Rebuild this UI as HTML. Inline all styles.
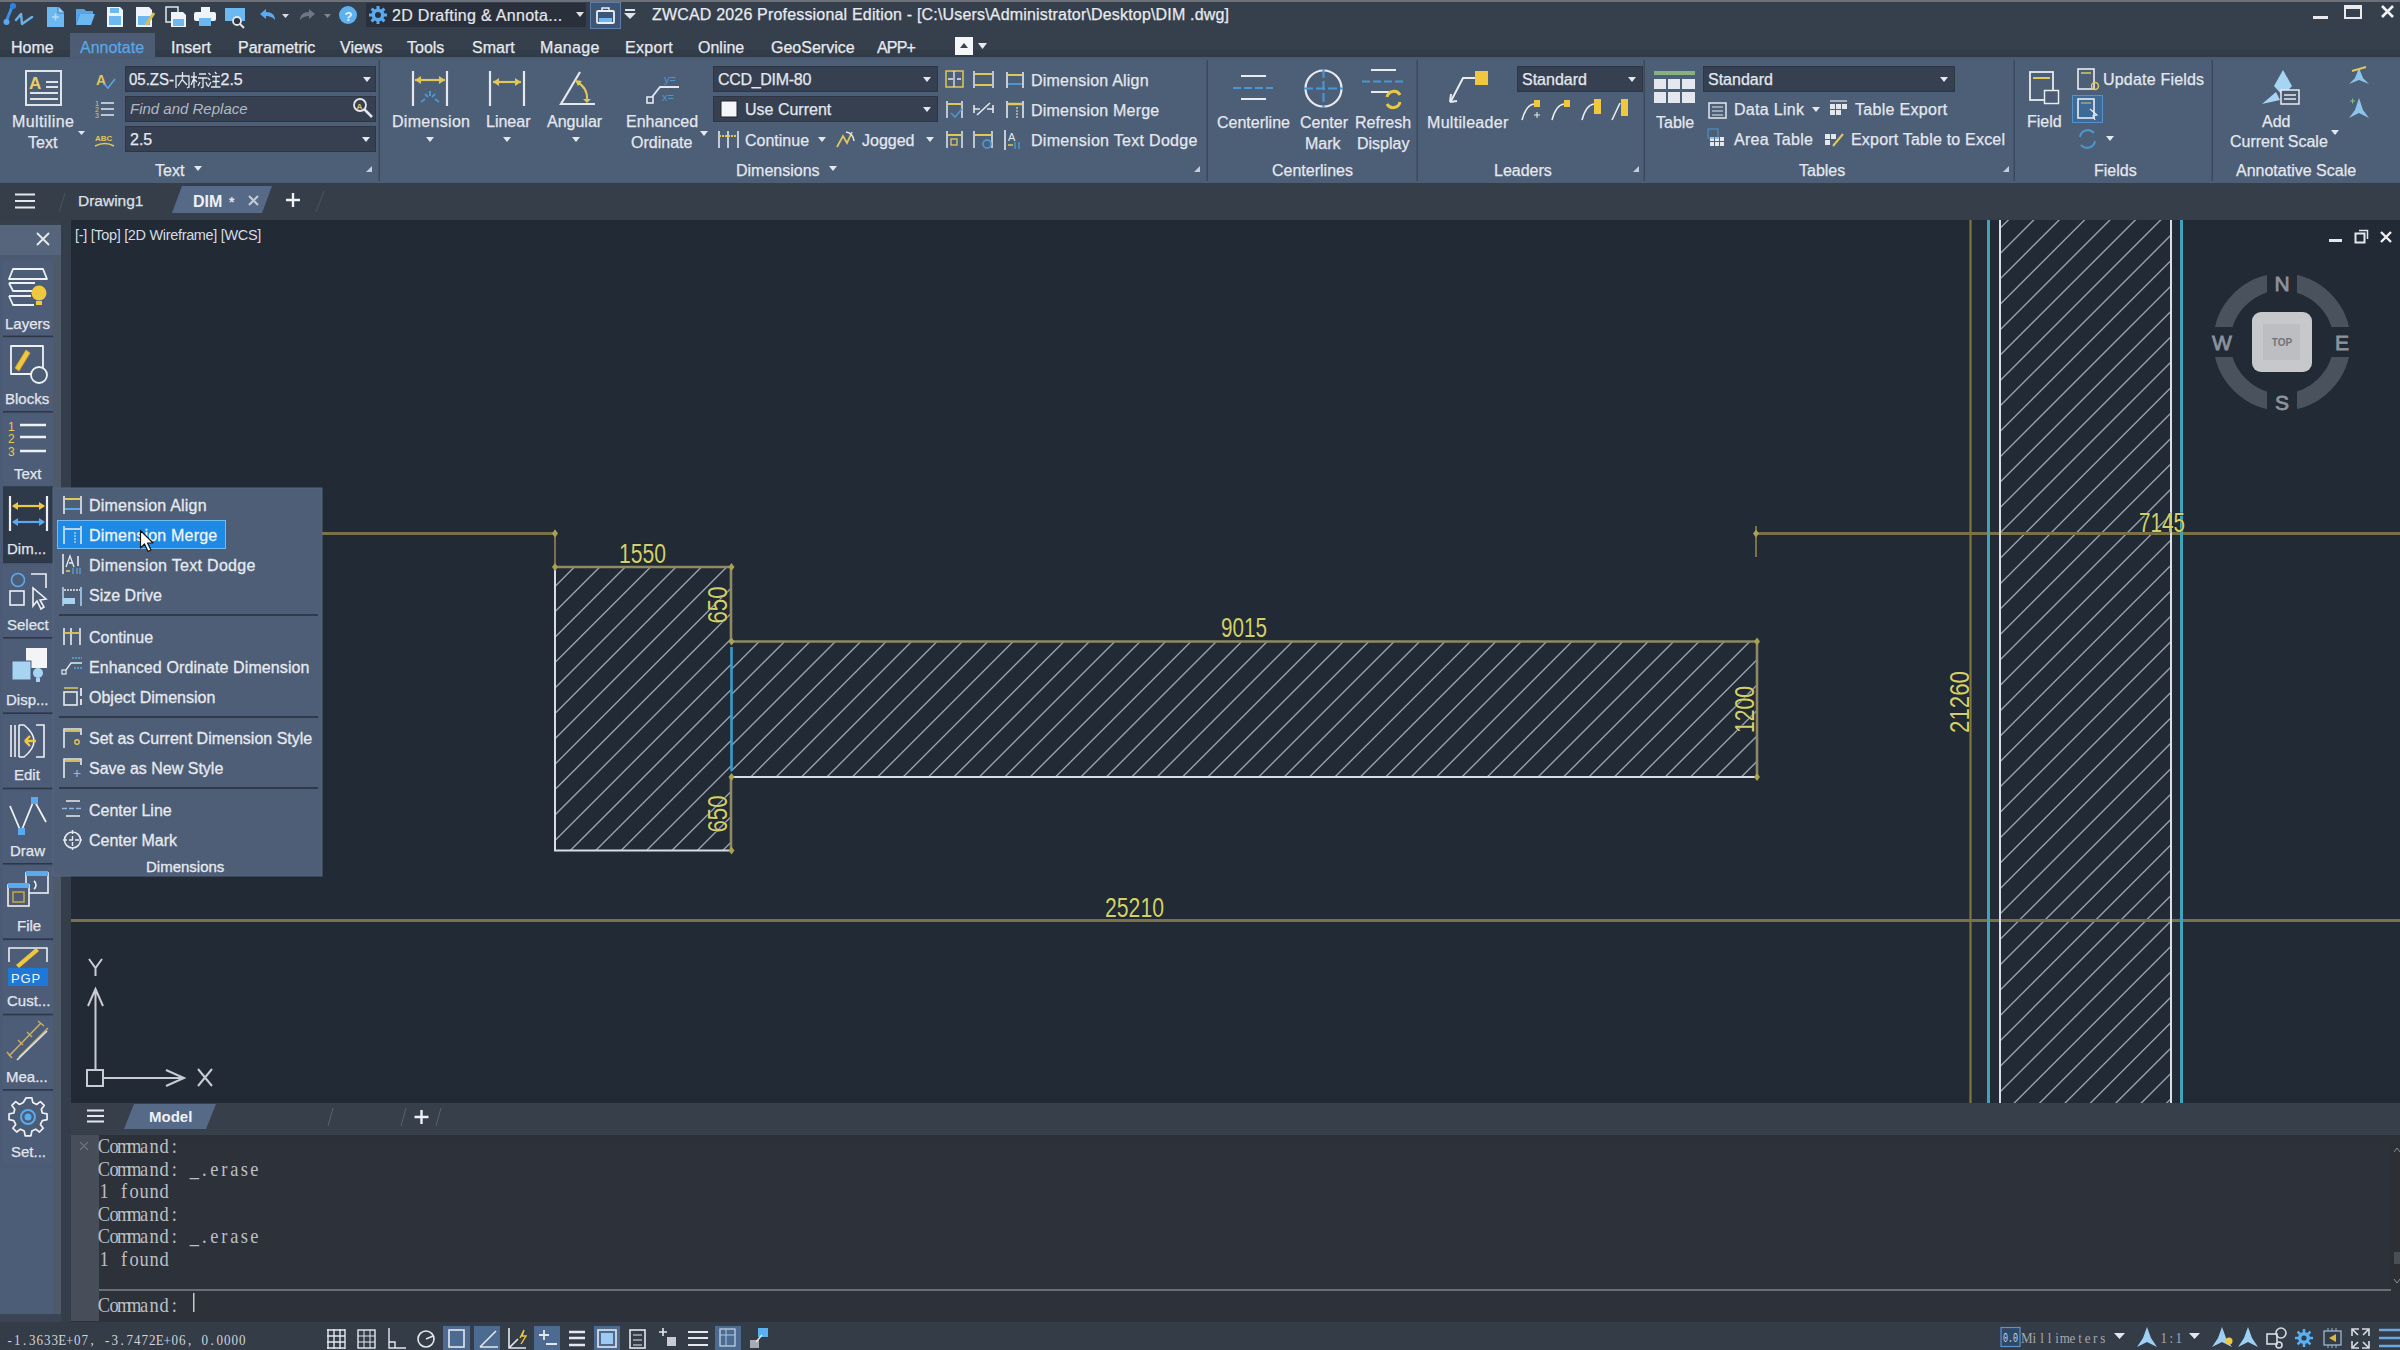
<!DOCTYPE html>
<html><head><meta charset="utf-8">
<style>
*{margin:0;padding:0}
html,body{width:2400px;height:1350px;overflow:hidden;background:#212a35}
svg{display:block}
text{font-family:"Liberation Sans",sans-serif;white-space:pre}
.m{font-family:"Liberation Mono",monospace}
</style></head><body>
<svg width="2400" height="1350" viewBox="0 0 2400 1350">
<!-- backgrounds -->
<rect x="0" y="0" width="2400" height="58" fill="#36404d"/>
<rect x="0" y="50" width="2400" height="8" fill="#323b48"/>
<rect x="0" y="0" width="2400" height="2" fill="#6b7079"/>
<rect x="70" y="33" width="85" height="25" fill="#4d5b73"/>
<rect x="0" y="58" width="2400" height="125" fill="#4d5e77"/>
<rect x="0" y="57" width="2400" height="2" fill="#4a5a72"/>
<rect x="0" y="183" width="2400" height="37" fill="#363e4a"/>
<rect x="71" y="220" width="2329" height="883" fill="#212a35"/>
<rect x="53" y="220" width="8" height="1102" fill="#4e5969"/>
<rect x="61" y="220" width="10" height="1102" fill="#343d4a"/>
<rect x="0" y="220" width="53" height="1102" fill="#4b5b75"/>
<rect x="71" y="1103" width="2329" height="32" fill="#373f4b"/>
<rect x="71" y="1135" width="2329" height="187" fill="#2d3139"/>
<rect x="71" y="1135" width="2329" height="8" fill="#2c3039"/>
<rect x="0" y="1322" width="2400" height="28" fill="#343c48"/>

<!-- title bar icons -->
<g stroke-linecap="round" stroke-linejoin="round">
  <path d="M6,22 L12,7" stroke="#3d8fe0" stroke-width="3" fill="none"/>
  <circle cx="13" cy="6" r="3" fill="#2f7fe0"/>
  <circle cx="6.5" cy="22" r="3" fill="#5aa8ee"/>
  <path d="M16,20 L21,14 L22,24 L32,17" stroke="#6ab0e8" stroke-width="2.5" fill="none"/>
</g>
<path d="M47,7 H59 L64,12 V27 H47 Z" fill="#6cb8f0"/>
<path d="M58,7 V13 H64" fill="#9fd0f5" stroke="#3a7cc0" stroke-width="1"/>
<path d="M52,17 H59 M55.5,13.5 V20.5" stroke="#b8dcf8" stroke-width="1.5"/>
<path d="M76,9 H84 L86,11 H93 V14 H80 L76,25 Z" fill="#5aa2e0"/>
<path d="M80,14 H95 L91,25 H76 Z" fill="#6cb8f0"/>
<path d="M107,7 H120 L123,10 V27 H107 Z" fill="#eef4fa"/>
<rect x="109" y="16" width="12" height="9" fill="#6cb8f0"/>
<rect x="110" y="8" width="9" height="5" fill="#6cb8f0"/>
<path d="M136,7 H149 L152,10 V27 H136 Z" fill="#eef4fa"/>
<rect x="138" y="16" width="12" height="9" fill="#6cb8f0"/>
<path d="M146,25 L154,13" stroke="#d8c050" stroke-width="3"/>
<path d="M166,7 H178 V22 H166 Z" fill="none" stroke="#dfe8f0" stroke-width="1.5"/>
<path d="M171,12 H183 L186,15 V27 H171 Z" fill="#eef4fa"/>
<rect x="173" y="19" width="11" height="7" fill="#6cb8f0"/>
<rect x="201" y="7" width="9" height="5" fill="#eef4fa"/>
<rect x="194" y="12" width="22" height="9" rx="2" fill="#eef4fa"/>
<rect x="199" y="18" width="12" height="8" fill="#6cb8f0"/>
<rect x="225" y="8" width="20" height="13" fill="#6cb8f0"/>
<circle cx="237" cy="21" r="4" fill="#2e3541" stroke="#e0e6ee" stroke-width="1.8"/>
<path d="M240,24 L244,28" stroke="#e0e6ee" stroke-width="2"/>
<path d="M260,14 L266,9 V12 C272,12 275,15 275,20 C272,17 270,16 266,16 V19 Z" fill="#5aaaf0"/>
<path d="M282,14 H289 L285.5,18 Z" fill="#d8dde4"/>
<path d="M315,14 L309,9 V12 C303,12 300,15 300,20 C303,17 305,16 309,16 V19 Z" fill="#6d7785"/>
<path d="M324,14 H331 L327.5,18 Z" fill="#7d8794"/>
<circle cx="348" cy="15" r="9" fill="#5eb0f0"/>
<text x="344.5" y="20.5" font-size="13" fill="#e8f4ff" font-weight="700">?</text>
<rect x="366" y="3" width="220" height="24" fill="#29303b"/>
<g transform="translate(378,15)" fill="#5aaaf0">
  <circle r="6.5"/>
  <g stroke="#5aaaf0" stroke-width="3">
   <path d="M0,-9 V9 M-9,0 H9 M-6.4,-6.4 L6.4,6.4 M-6.4,6.4 L6.4,-6.4"/>
  </g>
  <circle r="3" fill="#29303b"/>
</g>
<text x="392" y="21" font-size="16" fill="#e4e7ec" stroke="#e4e7ec" stroke-width="0.2" letter-spacing="0.3">2D Drafting &amp; Annota...</text>
<path d="M576,12 H584 L580,17 Z" fill="#dfe3e8"/>
<rect x="590.5" y="2.5" width="30" height="26" fill="#3d5675" stroke="#5b7fa8" stroke-width="1"/>
<rect x="597" y="11" width="17" height="12" rx="1" fill="none" stroke="#e8eef4" stroke-width="1.8"/>
<path d="M602,11 V8 H609 V11" fill="none" stroke="#e8eef4" stroke-width="1.5"/>
<rect x="599" y="18" width="13" height="4" fill="#6cb8f0"/>
<rect x="625" y="9" width="10" height="2" fill="#dfe3e8"/>
<path d="M624,13 H636 L630,19 Z" fill="#dfe3e8"/>
<text x="652" y="20" font-size="16" fill="#e8eaee" stroke="#e8eaee" stroke-width="0.25" letter-spacing="0.18">ZWCAD 2026 Professional Edition - [C:\Users\Administrator\Desktop\DIM .dwg]</text>
<!-- window controls -->
<rect x="2313" y="16" width="15" height="3" fill="#e8eaee"/>
<rect x="2345" y="6" width="16" height="12" fill="none" stroke="#e8eaee" stroke-width="2"/>
<rect x="2345" y="6" width="16" height="3" fill="#e8eaee"/>
<path d="M2382,6 L2393,17 M2393,6 L2382,17" stroke="#f0f2f5" stroke-width="2.6"/>
<!-- menu -->
<g font-size="16" fill="#e6e9ee" stroke="#e6e9ee" stroke-width="0.25">
<text x="11" y="53">Home</text>
<text x="80" y="53" fill="#5aa6e6" stroke="#5aa6e6">Annotate</text>
<text x="171" y="53">Insert</text>
<text x="238" y="53">Parametric</text>
<text x="340" y="53">Views</text>
<text x="407" y="53">Tools</text>
<text x="472" y="53">Smart</text>
<text x="540" y="53" letter-spacing="0.3">Manage</text>
<text x="625" y="53" letter-spacing="0.3">Export</text>
<text x="698" y="53">Online</text>
<text x="771" y="53">GeoService</text>
<text x="877" y="53" letter-spacing="-0.8">APP+</text>
</g>
<rect x="955" y="37" width="18" height="18" fill="#f4f6f8"/>
<path d="M960,48 H968 L964,43 Z" fill="#3b4350"/>
<path d="M978,43 H987 L982.5,49 Z" fill="#e8eaee"/>

<!-- ribbon panel separators -->
<g fill="#3b495c" transform="translate(0.5,0) scale(1,1)">
<rect x="378" y="60" width="1.5" height="121"/>
<rect x="1206" y="60" width="1.5" height="121"/>
<rect x="1416" y="60" width="1.5" height="121"/>
<rect x="1643" y="60" width="1.5" height="121"/>
<rect x="2013" y="60" width="1.5" height="121"/>
<rect x="2211" y="60" width="1.5" height="121"/>
</g>
<!-- combos -->
<g fill="#364050" stroke="#2e3644" stroke-width="1">
<rect x="125.5" y="66.5" width="250" height="25"/>
<rect x="125.5" y="96.5" width="250" height="25"/>
<rect x="125.5" y="126.5" width="250" height="25"/>
<rect x="713.5" y="66.5" width="224" height="25"/>
<rect x="713.5" y="96.5" width="224" height="25"/>
<rect x="1517.5" y="66.5" width="125" height="25"/>
<rect x="1703.5" y="66.5" width="251" height="25"/>
</g>
<g fill="#e4e8ee">
<path d="M363,77 H371 L367,82 Z"/>
<path d="M362,137 H370 L366,142 Z"/>
<path d="M923,77 H931 L927,82 Z"/>
<path d="M923,107 H931 L927,112 Z"/>
<path d="M1628,77 H1636 L1632,82 Z"/>
<path d="M1940,77 H1948 L1944,82 Z"/>
<path d="M78,131 H85 L81.5,135 Z"/>
<path d="M426,137 H434 L430,142 Z"/>
<path d="M503,137 H511 L507,142 Z"/>
<path d="M572,137 H580 L576,142 Z"/>
<path d="M700,131 H708 L704,136 Z"/>
<path d="M818,137 H826 L822,142 Z"/>
<path d="M926,137 H934 L930,142 Z"/>
<path d="M1812,107 H1820 L1816,112 Z"/>
<path d="M2106,136 H2114 L2110,141 Z"/>
<path d="M2331,130 H2339 L2335,135 Z"/>
<path d="M194,166 H202 L198,171 Z"/>
<path d="M829,166 H837 L833,171 Z"/>
<path d="M372,166 V172 H366 Z" opacity="0.8"/>
<path d="M1200,166 V172 H1194 Z" opacity="0.8"/>
<path d="M1639,166 V172 H1633 Z" opacity="0.8"/>
<path d="M2009,166 V172 H2003 Z" opacity="0.8"/>
</g>
<!-- ribbon texts -->
<g font-size="16" fill="#e4e8ee" stroke="#e4e8ee" stroke-width="0.25">
<text x="12" y="127" letter-spacing="0.4">Multiline</text>
<text x="28" y="148">Text</text>
<text x="129" y="85" textLength="45" lengthAdjust="spacingAndGlyphs">05.ZS-</text>
<g stroke="#e4e8ee" stroke-width="1.3" fill="none">
<path d="M176,88V76H189V87L187,88M182.5,72V79M182.5,79L178,86M182.5,80L187,85"/>
<path d="M191,77H197M194,72V88M194,78L191,85M194,79L197,82M199,74H206M198,78H207.5M203,78V87L201,88M200,82L198,86M206,82L207.5,86"/>
<path d="M208.5,73L210.5,75M208,78L210,80M208,87L211,82M215,72L216.5,74M212,76.5H220M212.5,81.5H219.5M211,87H220.5M216,76.5V87"/>
</g>
<text x="220.5" y="85">2.5</text>
<text x="130" y="114" font-style="italic" fill="#b0b8c4" stroke="none" font-size="15">Find and Replace</text>
<text x="130" y="145">2.5</text>
<text x="155" y="176">Text</text>
<text x="392" y="127" letter-spacing="0.3">Dimension</text>
<text x="486" y="127">Linear</text>
<text x="547" y="127">Angular</text>
<text x="626" y="127">Enhanced</text>
<text x="631" y="148">Ordinate</text>
<text x="718" y="85" letter-spacing="-0.3">CCD_DIM-80</text>
<text x="745" y="115">Use Current</text>
<text x="745" y="146">Continue</text>
<text x="862" y="146">Jogged</text>
<text x="1031" y="86" letter-spacing="0.2">Dimension Align</text>
<text x="1031" y="116" letter-spacing="0.2">Dimension Merge</text>
<text x="1031" y="146" letter-spacing="0.3">Dimension Text Dodge</text>
<text x="736" y="176">Dimensions</text>
<text x="1217" y="128">Centerline</text>
<text x="1300" y="128">Center</text>
<text x="1305" y="149">Mark</text>
<text x="1355" y="128">Refresh</text>
<text x="1357" y="149">Display</text>
<text x="1272" y="176">Centerlines</text>
<text x="1427" y="128" letter-spacing="0.3">Multileader</text>
<text x="1522" y="85">Standard</text>
<text x="1494" y="176">Leaders</text>
<text x="1656" y="128">Table</text>
<text x="1708" y="85">Standard</text>
<text x="1734" y="115" letter-spacing="0.3">Data Link</text>
<text x="1855" y="115" letter-spacing="0.3">Table Export</text>
<text x="1734" y="145" letter-spacing="0.3">Area Table</text>
<text x="1851" y="145" letter-spacing="0.2">Export Table to Excel</text>
<text x="1799" y="176">Tables</text>
<text x="2027" y="127">Field</text>
<text x="2103" y="85" letter-spacing="0.2">Update Fields</text>
<text x="2094" y="176">Fields</text>
<text x="2262" y="127">Add</text>
<text x="2230" y="147">Current Scale</text>
<text x="2236" y="176">Annotative Scale</text>
</g>

<!-- ribbon icons -->
<g fill="none" stroke-linecap="butt">
<!-- Multiline text -->
<rect x="26" y="71" width="35" height="34" stroke="#dfe4ea" stroke-width="2"/>
<text x="29" y="89" font-size="17" font-weight="700" fill="#e8d060" stroke="none">A</text>
<path d="M46,82 H58 M46,87 H58 M30,93 H58 M30,99 H58" stroke="#dfe4ea" stroke-width="2"/>
<!-- small text icons -->
<text x="96" y="85" font-size="14" font-weight="700" fill="#e0c858" stroke="none">A</text>
<path d="M104,84 L108,88 L115,79" stroke="#5aa8e0" stroke-width="1.5"/>
<text x="95" y="106" font-size="7" fill="#e0c858" stroke="none">1</text>
<text x="95" y="112" font-size="7" fill="#e0c858" stroke="none">2</text>
<text x="95" y="118" font-size="7" fill="#e0c858" stroke="none">3</text>
<path d="M101,103 H114 M101,109 H114 M101,115 H114" stroke="#e4e8ee" stroke-width="1.6"/>
<text x="95" y="141" font-size="8" font-weight="700" fill="#e0c858" stroke="none">ABC</text>
<path d="M95,146 Q105,141 114,146" stroke="#e0c858" stroke-width="1.5"/>
<!-- magnifier -->
<circle cx="360" cy="105" r="6" stroke="#e4e8ee" stroke-width="1.8"/>
<path d="M364,109 L372,117" stroke="#e4e8ee" stroke-width="2.5"/>
<text x="356.5" y="109" font-size="8" font-weight="700" fill="#e0c858" stroke="none">A</text>
<!-- Dimension -->
<path d="M413,71 V106 M447,71 V106" stroke="#e4e8ee" stroke-width="2.2"/>
<path d="M415,80 H445" stroke="#e0c858" stroke-width="2.2"/>
<path d="M415,80 L421,76 V84 Z M445,80 L439,76 V84 Z" fill="#e0c858" stroke="none"/>
<path d="M421,102 L425,99 M425,94 L428,97 M430,91 V96 M435,94 L432,97 M439,102 L435,99" stroke="#4a96d0" stroke-width="2"/>
<!-- Linear -->
<path d="M490,71 V106 M524,71 V106" stroke="#e4e8ee" stroke-width="2.2"/>
<path d="M493,82 H521" stroke="#e0c858" stroke-width="2.2"/>
<path d="M493,82 L499,78 V86 Z M521,82 L515,78 V86 Z" fill="#e0c858" stroke="none"/>
<!-- Angular -->
<path d="M580,72 L561,104 H595" stroke="#e4e8ee" stroke-width="2.2"/>
<path d="M577,82 Q588,88 587,100" stroke="#e0c858" stroke-width="2"/>
<path d="M575,80 L582,81 L578,86 Z M583,99 L591,99 L587,103 Z" fill="#e0c858" stroke="none"/>
<!-- Enhanced ordinate -->
<rect x="647" y="97" width="6" height="6" stroke="#e4e8ee" stroke-width="1.6"/>
<path d="M652,97 L660,87 H679" stroke="#e4e8ee" stroke-width="1.8"/>
<text x="664" y="83" font-size="11" fill="#4a96d0" stroke="none">y=</text>
<text x="662" y="101" font-size="11" fill="#4a96d0" stroke="none">x=</text>
<!-- use current swatch -->
<rect x="721" y="101" width="16" height="16" fill="#f4f6f8" stroke="#20262e" stroke-width="1"/>
<!-- Continue icon -->
<path d="M719,131 V148 M728,131 V148 M738,131 V148" stroke="#e4e8ee" stroke-width="1.6"/>
<path d="M719,136 H738" stroke="#e0c858" stroke-width="1.8" stroke-dasharray="2,1"/>
<!-- Jogged icon -->
<path d="M837,147 L843,136 L847,143 L852,132" stroke="#e0c858" stroke-width="1.8"/>
<path d="M846,132 Q853,133 854,141" stroke="#e4e8ee" stroke-width="1.5"/>
<!-- small dim icon grid -->
<rect x="946" y="71" width="17" height="16" stroke="#e0c858" stroke-width="1.5"/>
<path d="M954,71 V87 M948,79 H953 M957,79 H961" stroke="#e4e8ee" stroke-width="1.3"/>
<path d="M974,71 V88 M993,71 V88" stroke="#e4e8ee" stroke-width="1.5"/>
<path d="M975,74 H992 M975,85 H992" stroke="#e0c858" stroke-width="2"/>
<path d="M947,101 V118 M962,101 V118" stroke="#e4e8ee" stroke-width="1.5"/>
<path d="M948,104 H961" stroke="#e0c858" stroke-width="2"/>
<path d="M951,113 L955,117 L962,109" stroke="#4a96d0" stroke-width="1.6"/>
<path d="M974,109 H980 M987,109 H993 M977,115 L990,103" stroke="#e4e8ee" stroke-width="1.6"/>
<path d="M974,105 V113 M993,105 V113" stroke="#e4e8ee" stroke-width="1.6"/>
<path d="M947,131 V148 M962,131 V148" stroke="#e4e8ee" stroke-width="1.5"/>
<path d="M948,135 H961" stroke="#e0c858" stroke-width="2"/>
<rect x="951" y="139" width="6" height="6" stroke="#e0c858" stroke-width="1.3"/>
<path d="M974,131 V148 M992,131 V148" stroke="#e4e8ee" stroke-width="1.5"/>
<path d="M975,135 H991" stroke="#e0c858" stroke-width="2"/>
<circle cx="987" cy="144" r="4" stroke="#4a96d0" stroke-width="1.8"/>
<!-- Dimension align/merge/dodge icons -->
<path d="M1007,72 V88 M1023,72 V88" stroke="#e4e8ee" stroke-width="1.6"/>
<path d="M1008,75 H1022" stroke="#e0c858" stroke-width="2"/>
<path d="M1008,84 H1022" stroke="#4a96d0" stroke-width="2"/>
<path d="M1007,101 V118 M1023,101 V118" stroke="#e4e8ee" stroke-width="1.6"/>
<path d="M1008,104 H1022" stroke="#e0c858" stroke-width="2.5"/>
<path d="M1017,107 V118" stroke="#a0a8b0" stroke-width="2" stroke-dasharray="2,1"/>
<path d="M1005,130 V150" stroke="#e4e8ee" stroke-width="1.6"/>
<text x="1008" y="141" font-size="11" fill="#e4e8ee" stroke="none">A</text>
<path d="M1008,145 H1013" stroke="#e0c858" stroke-width="1.5"/>
<path d="M1015,142 V149 M1019,142 V149" stroke="#4a96d0" stroke-width="1.5"/>
<!-- Centerline -->
<path d="M1241,76 H1266 M1241,99 H1266" stroke="#e8ecf0" stroke-width="2.2"/>
<path d="M1233,88 H1273" stroke="#4a96d0" stroke-width="2.2" stroke-dasharray="8,3"/>
<!-- Center mark -->
<circle cx="1323.5" cy="88.5" r="18" stroke="#e8ecf0" stroke-width="2.2"/>
<path d="M1304,88.5 H1343 M1323.5,69 V108" stroke="#4a96d0" stroke-width="2.2" stroke-dasharray="9,3"/>
<!-- Refresh display -->
<path d="M1371,70 H1396 M1371,92 H1389" stroke="#e8ecf0" stroke-width="2.2"/>
<path d="M1362,81.5 H1403" stroke="#4a96d0" stroke-width="2.2" stroke-dasharray="8,3"/>
<path d="M1387,97 A7,7 0 0 1 1400,95 M1400,102 A7,7 0 0 1 1387,104" stroke="#e8c848" stroke-width="3"/>
<!-- Multileader -->
<rect x="1475" y="71" width="13" height="14" fill="#f0c840" stroke="none"/>
<path d="M1475,78 H1463 L1451,101" stroke="#e8ecf0" stroke-width="2"/>
<path d="M1450,102 L1451,94 M1450,102 L1457,101" stroke="#e8ecf0" stroke-width="2"/>
<!-- small leader icons -->
<g stroke="#e8ecf0" stroke-width="1.6">
<path d="M1522,120 Q1526,105 1534,104"/><path d="M1582,120 Q1586,105 1594,104"/>
<path d="M1552,120 Q1556,105 1564,104"/><path d="M1612,120 L1620,103"/>
</g>
<g fill="#f0c840" stroke="none">
<rect x="1534" y="100" width="6" height="7"/><rect x="1564" y="100" width="6" height="7"/>
<rect x="1594" y="99" width="7" height="15"/><rect x="1621" y="99" width="7" height="17"/>
</g>
<path d="M1537,112 V118 M1534,115 H1540" stroke="#e8ecf0" stroke-width="1"/>
<!-- Table -->
<rect x="1654" y="71" width="41" height="4" fill="#8ab080" stroke="none"/>
<g fill="#e4e8ee" stroke="none">
<rect x="1654" y="79" width="12" height="10"/><rect x="1668" y="79" width="12" height="10"/><rect x="1682" y="79" width="13" height="10"/>
<rect x="1654" y="92" width="12" height="11"/><rect x="1668" y="92" width="12" height="11"/><rect x="1682" y="92" width="13" height="11"/>
</g>
<!-- data link, table export, area table, export excel -->
<rect x="1709" y="103" width="17" height="15" stroke="#e4e8ee" stroke-width="1.5"/>
<path d="M1712,107 H1723 M1712,111 H1723 M1712,115 H1723" stroke="#e4e8ee" stroke-width="1.2"/>
<g fill="#e4e8ee" stroke="none">
<rect x="1830" y="104" width="5" height="5"/><rect x="1836" y="104" width="5" height="5"/><rect x="1842" y="104" width="5" height="5"/>
<rect x="1830" y="110" width="5" height="5"/><rect x="1836" y="110" width="5" height="5"/>
<rect x="1710" y="137" width="4" height="4"/><rect x="1715" y="137" width="4" height="4"/><rect x="1720" y="137" width="4" height="4"/>
<rect x="1710" y="142" width="4" height="4"/><rect x="1715" y="142" width="4" height="4"/><rect x="1720" y="142" width="4" height="4"/>
<rect x="1825" y="134" width="5" height="5"/><rect x="1831" y="134" width="5" height="5"/>
<rect x="1825" y="140" width="5" height="5"/>
</g>
<path d="M1830,101 H1847" stroke="#e4e8ee" stroke-width="1.2"/>
<rect x="1708" y="129" width="10" height="9" stroke="#4a96d0" stroke-width="1"/>
<path d="M1833,146 L1843,134" stroke="#e0c858" stroke-width="2"/>
<!-- Field -->
<rect x="2030" y="72" width="23" height="28" stroke="#e8ecf0" stroke-width="1.8"/>
<path d="M2033,78 H2050" stroke="#e0c858" stroke-width="2"/>
<rect x="2044.5" y="90.5" width="14" height="13" fill="#4a5a72" stroke="#e8ecf0" stroke-width="1.5"/>
<!-- Update fields -->
<rect x="2078" y="69" width="16" height="20" stroke="#e8ecf0" stroke-width="1.6"/>
<path d="M2081,73 H2091" stroke="#e0c858" stroke-width="1.5"/>
<circle cx="2095" cy="86" r="3.5" stroke="#e0c858" stroke-width="1.5"/>
<rect x="2072.5" y="95.5" width="30" height="27" fill="#3e6a98" stroke="#5a90c8" stroke-width="1"/>
<rect x="2078" y="99" width="16" height="19" stroke="#e8ecf0" stroke-width="1.6"/>
<path d="M2081,103 H2091" stroke="#b0a070" stroke-width="1.5"/>
<path d="M2090,109 L2097,115 L2093,116 L2095,120" stroke="#e8ecf0" stroke-width="1.2"/>
<path d="M2080,137 A8,8 0 0 1 2094,133 M2095,141 A8,8 0 0 1 2081,145" stroke="#4a96d0" stroke-width="2"/>
<!-- Annotative scale -->
<path d="M2283,70 L2292,86 L2283,96 L2274,86 Z" fill="#a8d4f4" stroke="none"/>
<path d="M2276,92 L2262,104 L2280,100 Z" fill="#a8d4f4" stroke="none"/>
<rect x="2281" y="90" width="18" height="14" fill="#4a5a72" stroke="#e8ecf0" stroke-width="1.5"/>
<path d="M2284,95 H2296 M2284,99 H2296" stroke="#e8ecf0" stroke-width="1.5"/>
<path d="M2359,68 L2363,78 L2369,84 L2359,80 L2349,84 L2355,78 Z" fill="#8cc4ec" stroke="none"/>
<path d="M2352,71 L2366,67" stroke="#e0c858" stroke-width="2"/>
<path d="M2359,98 L2363,110 L2369,118 L2359,113 L2349,118 L2355,110 Z" fill="#8cc4ec" stroke="none"/>
<path d="M2350,101 H2355 M2352.5,98.5 V103.5" stroke="#80c080" stroke-width="1"/>
</g>

<!-- doc tabs -->
<path d="M15,194.5 H35 M15,201 H35 M15,207.5 H35" stroke="#e4e8ee" stroke-width="2.2"/>
<path d="M59,212 L65,193" stroke="#4a5360" stroke-width="1"/>
<text x="78" y="206" font-size="15.5" fill="#dde1e7" stroke="#dde1e7" stroke-width="0.25">Drawing1</text>
<path d="M182,186 H272 L262,213 H172 Z" fill="#566a88"/>
<text x="193" y="207" font-size="16" font-weight="700" fill="#eef1f5">DIM</text>
<text x="229" y="207" font-size="14" font-weight="700" fill="#dfe4ea">*</text>
<path d="M249,196 L258,205 M258,196 L249,205" stroke="#c4ccd6" stroke-width="2"/>
<path d="M293,193 V207 M286,200 H300" stroke="#eef1f5" stroke-width="2.4"/>
<path d="M316,212 L324,191" stroke="#4a5360" stroke-width="1"/>
<!-- canvas header -->
<text x="75" y="240" font-size="14" fill="#d8dce2" letter-spacing="-0.3" textLength="186" lengthAdjust="spacingAndGlyphs">[-] [Top] [2D Wireframe] [WCS]</text>
<!-- canvas window controls -->
<rect x="2329" y="239" width="13" height="3" fill="#e4e8ee"/>
<rect x="2355.5" y="233.5" width="9" height="9" fill="none" stroke="#e4e8ee" stroke-width="2"/>
<path d="M2359,230.5 H2367.5 V239" fill="none" stroke="#e4e8ee" stroke-width="1.5"/>
<path d="M2381,232 L2391,242 M2391,232 L2381,242" stroke="#eef0f3" stroke-width="2.4"/>

<!-- left toolbar -->
<rect x="0" y="220" width="61" height="6" fill="#363f4c"/>
<rect x="0" y="225" width="61" height="30" fill="#56657b"/>
<path d="M37,233 L49,245 M49,233 L37,245" stroke="#e8ecf0" stroke-width="1.8"/>
<rect x="0" y="255" width="53" height="5" fill="#4b5a72"/>
<rect x="3" y="261.0" width="50" height="74.6" fill="#4d5d78"/>
<rect x="3" y="335.6" width="50" height="1.5" fill="#2c3644"/>
<rect x="3" y="338.6" width="50" height="72.4" fill="#4d5d78"/>
<rect x="3" y="411.0" width="50" height="1.5" fill="#2c3644"/>
<rect x="3" y="414.0" width="50" height="72.3" fill="#4d5d78"/>
<rect x="3" y="486.3" width="50" height="1.5" fill="#2c3644"/>
<rect x="3" y="489.3" width="50" height="72.3" fill="#4d5d78"/>
<rect x="3" y="561.6" width="50" height="1.5" fill="#2c3644"/>
<rect x="3" y="564.6" width="50" height="72.4" fill="#4d5d78"/>
<rect x="3" y="637.0" width="50" height="1.5" fill="#2c3644"/>
<rect x="3" y="640.0" width="50" height="72.4" fill="#4d5d78"/>
<rect x="3" y="712.4" width="50" height="1.5" fill="#2c3644"/>
<rect x="3" y="715.4" width="50" height="72.4" fill="#4d5d78"/>
<rect x="3" y="787.7" width="50" height="1.5" fill="#2c3644"/>
<rect x="3" y="790.7" width="50" height="72.3" fill="#4d5d78"/>
<rect x="3" y="863.0" width="50" height="1.5" fill="#2c3644"/>
<rect x="3" y="866.0" width="50" height="72.4" fill="#4d5d78"/>
<rect x="3" y="938.4" width="50" height="1.5" fill="#2c3644"/>
<rect x="3" y="941.4" width="50" height="72.4" fill="#4d5d78"/>
<rect x="3" y="1013.8" width="50" height="1.5" fill="#2c3644"/>
<rect x="3" y="1016.8" width="50" height="72.3" fill="#4d5d78"/>
<rect x="3" y="1089.1" width="50" height="1.5" fill="#2c3644"/>
<rect x="3" y="1092.1" width="50" height="72.3" fill="#4d5d78"/>
<rect x="3" y="487" width="50" height="75" fill="#2e3949"/>
<text x="5" y="328.5" font-size="15" fill="#e2e6ec" stroke="#e2e6ec" stroke-width="0.25">Layers</text>
<text x="5" y="403.8" font-size="15" fill="#e2e6ec" stroke="#e2e6ec" stroke-width="0.25">Blocks</text>
<text x="14" y="479.1" font-size="15" fill="#e2e6ec" stroke="#e2e6ec" stroke-width="0.25">Text</text>
<text x="7" y="554.4" font-size="15" fill="#e2e6ec" stroke="#e2e6ec" stroke-width="0.25">Dim...</text>
<text x="7" y="629.7" font-size="15" fill="#e2e6ec" stroke="#e2e6ec" stroke-width="0.25">Select</text>
<text x="6" y="705.0" font-size="15" fill="#e2e6ec" stroke="#e2e6ec" stroke-width="0.25">Disp...</text>
<text x="14" y="780.3" font-size="15" fill="#e2e6ec" stroke="#e2e6ec" stroke-width="0.25">Edit</text>
<text x="10" y="855.6" font-size="15" fill="#e2e6ec" stroke="#e2e6ec" stroke-width="0.25">Draw</text>
<text x="17" y="930.9" font-size="15" fill="#e2e6ec" stroke="#e2e6ec" stroke-width="0.25">File</text>
<text x="7" y="1006.2" font-size="15" fill="#e2e6ec" stroke="#e2e6ec" stroke-width="0.25">Cust...</text>
<text x="6" y="1081.5" font-size="15" fill="#e2e6ec" stroke="#e2e6ec" stroke-width="0.25">Mea...</text>
<text x="11" y="1156.8" font-size="15" fill="#e2e6ec" stroke="#e2e6ec" stroke-width="0.25">Set...</text>
<rect x="0" y="1168" width="53" height="150" fill="#4c5d78"/>
<rect x="0" y="1314" width="61" height="8" fill="#3a4452"/>

<g fill="none" stroke="#eef1f4" stroke-width="1.8" stroke-linejoin="round">
<!-- layers -->
<path d="M13,269 H43 L47,279 H9 Z"/>
<path d="M9,283 H35 M9,283 L13,291 H33"/>
<path d="M9,296 L13,305 H34 M9,296 H31"/>
<circle cx="39" cy="293" r="7.5" fill="#f0c840" stroke="none"/>
<rect x="36" y="301" width="6" height="4" fill="#f0c840" stroke="none"/>
<!-- blocks -->
<rect x="11" y="346" width="32" height="28"/>
<path d="M15,368 L26,350 L30,353 L19,371 Z" fill="#f0c840" stroke="#c8a030" stroke-width="1"/>
<circle cx="39" cy="375" r="8" fill="#4c5c75"/>
<!-- text -->
<path d="M20,425 H46 M20,437 H46 M20,451 H46" stroke-width="2.4"/>
</g>
<text x="8" y="431" font-size="12" fill="#e8c850">1</text>
<text x="8" y="443" font-size="12" fill="#e8c850">2</text>
<text x="8" y="456" font-size="12" fill="#e8c850">3</text>
<g fill="none" stroke-width="2.2">
<!-- dim -->
<path d="M10,496 V531 M47,496 V531" stroke="#eef1f4"/>
<path d="M13,506 H44" stroke="#f0c840"/>
<path d="M12,506 L18,502 V510 Z M45,506 L39,502 V510 Z" fill="#f0c840" stroke="none"/>
<path d="M13,522 H44" stroke="#5aaaf0"/>
<path d="M12,522 L18,518 V526 Z M45,522 L39,518 V526 Z" fill="#5aaaf0" stroke="none"/>
</g>
<g fill="none" stroke-width="1.6">
<!-- select -->
<circle cx="18" cy="580" r="6.5" stroke="#5aaaf0"/>
<rect x="10" y="591" width="14" height="14" stroke="#eef1f4"/>
<path d="M31,574 H46 V588" stroke="#eef1f4"/>
<path d="M33,588 L33,606 L37,601 L41,609 L44,607 L40,600 L46,599 Z" fill="#4c5c75" stroke="#eef1f4"/>
</g>
<!-- display -->
<rect x="26" y="648" width="21" height="20" fill="#f2f4f6"/>
<rect x="12" y="661" width="19" height="19" fill="#a8d4f4" stroke="#4c5c75" stroke-width="1"/>
<circle cx="38" cy="673" r="5" fill="#a8d4f4"/>
<rect x="36" y="678" width="4" height="4" fill="#a8d4f4"/>
<!-- edit -->
<g fill="none" stroke="#eef1f4" stroke-width="1.6">
<path d="M11,725 V757 M15,725 V757 M19,725 V757"/>
<path d="M19,725 H24 Q34,733 34,741 Q34,749 24,757 H19"/>
<path d="M36,725 H44 V757 H36"/>
</g>
<path d="M25,741 H36 M25,741 L30,736 M25,741 L30,746" stroke="#f0c840" stroke-width="2.4" fill="none"/>
<!-- draw -->
<path d="M10,806 L21,832 L34,800 L46,822" fill="none" stroke="#eef1f4" stroke-width="1.8"/>
<rect x="18" y="828" width="7" height="7" fill="#5aaaf0"/>
<rect x="31" y="797" width="7" height="7" fill="#5aaaf0"/>
<!-- file -->
<rect x="26" y="873" width="22" height="20" fill="none" stroke="#eef1f4" stroke-width="1.6"/>
<rect x="26" y="871" width="22" height="5" fill="#5aaaf0"/>
<path d="M34,881 A5,5 0 0 1 34,889" fill="none" stroke="#eef1f4" stroke-width="1.6"/>
<rect x="8" y="885" width="21" height="21" fill="#4c5c75" stroke="#eef1f4" stroke-width="1.6"/>
<rect x="8" y="883" width="21" height="5" fill="#5aaaf0"/>
<rect x="13" y="892" width="11" height="10" fill="none" stroke="#c8a840" stroke-width="1.5"/>
<!-- cust -->
<path d="M9,962 V948 H47 V962" fill="none" stroke="#eef1f4" stroke-width="1.6"/>
<path d="M16,965 L36,948 L39,951 L19,968 Z" fill="#f0c840"/>
<rect x="8" y="968" width="40" height="18" fill="#1e78d8"/>
<text x="11" y="983" font-size="13" fill="#eef4fa" letter-spacing="0.8">PGP</text>
<!-- measure -->
<path d="M9,1056 L41,1023 M19,1057 L48,1028" fill="none" stroke="#c8b060" stroke-width="1.6"/>
<path d="M7,1052 L12,1058 M38,1021 L44,1026 M18,1040 L23,1045 M27,1032 L32,1037" stroke="#c8b060" stroke-width="1.4"/>
<path d="M17,1060 L47,1031" stroke="#dfe4ea" stroke-width="1.6"/>
<!-- settings gear -->
<g transform="translate(28,1117)">
<path d="M-3,-16 H3 L4,-11 L8,-9 L12,-12 L16,-8 L13,-4 L14,0 L19,1 V7 L14,8 L12,12 L15,16 L11,20 L7,17 L3,19 L2,24 H-4 L-5,19 L-9,17 L-13,20 L-17,16 L-14,12 L-16,8 L-21,7 V1 L-16,0 L-15,-4 L-18,-8 L-14,-12 L-10,-9 L-6,-11 Z" transform="translate(1,-4) scale(0.95)" fill="#4c5c75" stroke="#eef1f4" stroke-width="1.8" stroke-linejoin="round"/>
<circle cx="0" cy="0" r="7" fill="#4c5c75" stroke="#5aaaf0" stroke-width="2"/>
<circle cx="0" cy="0" r="3.5" fill="#5aaaf0"/>
</g>

<!-- canvas drawing -->
<clipPath id="cv"><rect x="71" y="220" width="2329" height="883"/></clipPath>
<g clip-path="url(#cv)">
<path d="M555.0,586.4L574.4,567.0M555.0,611.8L599.8,567.0M555.0,637.2L625.2,567.0M555.0,662.6L650.6,567.0M555.0,688.0L676.0,567.0M555.0,713.4L701.4,567.0M555.0,738.8L726.8,567.0M555.0,764.2L731.0,588.2M555.0,789.6L731.0,613.6M555.0,815.0L731.0,639.0M555.0,840.4L731.0,664.4M570.3,850.5L731.0,689.8M595.7,850.5L731.0,715.2M621.1,850.5L731.0,740.6M646.5,850.5L731.0,766.0M671.9,850.5L731.0,791.4M697.3,850.5L731.0,816.8M722.7,850.5L731.0,842.2" stroke="#98a1ae" stroke-width="1.4" fill="none"/>
<path d="M731.0,644.3L733.8,641.5M731.0,669.7L759.2,641.5M731.0,695.1L784.6,641.5M731.0,720.5L810.0,641.5M731.0,745.9L835.4,641.5M731.0,771.3L860.8,641.5M750.7,777.0L886.2,641.5M776.1,777.0L911.6,641.5M801.5,777.0L937.0,641.5M826.9,777.0L962.4,641.5M852.3,777.0L987.8,641.5M877.7,777.0L1013.2,641.5M903.1,777.0L1038.6,641.5M928.5,777.0L1064.0,641.5M953.9,777.0L1089.4,641.5M979.3,777.0L1114.8,641.5M1004.7,777.0L1140.2,641.5M1030.1,777.0L1165.6,641.5M1055.5,777.0L1191.0,641.5M1080.9,777.0L1216.4,641.5M1106.3,777.0L1241.8,641.5M1131.7,777.0L1267.2,641.5M1157.1,777.0L1292.6,641.5M1182.5,777.0L1318.0,641.5M1207.9,777.0L1343.4,641.5M1233.3,777.0L1368.8,641.5M1258.7,777.0L1394.2,641.5M1284.1,777.0L1419.6,641.5M1309.5,777.0L1445.0,641.5M1334.9,777.0L1470.4,641.5M1360.3,777.0L1495.8,641.5M1385.7,777.0L1521.2,641.5M1411.1,777.0L1546.6,641.5M1436.5,777.0L1572.0,641.5M1461.9,777.0L1597.4,641.5M1487.3,777.0L1622.8,641.5M1512.7,777.0L1648.2,641.5M1538.1,777.0L1673.6,641.5M1563.5,777.0L1699.0,641.5M1588.9,777.0L1724.4,641.5M1614.3,777.0L1749.8,641.5M1639.7,777.0L1757.0,659.7M1665.1,777.0L1757.0,685.1M1690.5,777.0L1757.0,710.5M1715.9,777.0L1757.0,735.9M1741.3,777.0L1757.0,761.3" stroke="#98a1ae" stroke-width="1.4" fill="none"/>
<path d="M2000.0,202.9L2002.9,200.0M2000.0,228.3L2028.3,200.0M2000.0,253.7L2053.7,200.0M2000.0,279.1L2079.1,200.0M2000.0,304.5L2104.5,200.0M2000.0,329.9L2129.9,200.0M2000.0,355.3L2155.3,200.0M2000.0,380.7L2171.0,209.7M2000.0,406.1L2171.0,235.1M2000.0,431.5L2171.0,260.5M2000.0,456.9L2171.0,285.9M2000.0,482.3L2171.0,311.3M2000.0,507.7L2171.0,336.7M2000.0,533.1L2171.0,362.1M2000.0,558.5L2171.0,387.5M2000.0,583.9L2171.0,412.9M2000.0,609.3L2171.0,438.3M2000.0,634.7L2171.0,463.7M2000.0,660.1L2171.0,489.1M2000.0,685.5L2171.0,514.5M2000.0,710.9L2171.0,539.9M2000.0,736.3L2171.0,565.3M2000.0,761.7L2171.0,590.7M2000.0,787.1L2171.0,616.1M2000.0,812.5L2171.0,641.5M2000.0,837.9L2171.0,666.9M2000.0,863.3L2171.0,692.3M2000.0,888.7L2171.0,717.7M2000.0,914.1L2171.0,743.1M2000.0,939.5L2171.0,768.5M2000.0,964.9L2171.0,793.9M2000.0,990.3L2171.0,819.3M2000.0,1015.7L2171.0,844.7M2000.0,1041.1L2171.0,870.1M2000.0,1066.5L2171.0,895.5M2000.0,1091.9L2171.0,920.9M2007.3,1110.0L2171.0,946.3M2032.7,1110.0L2171.0,971.7M2058.1,1110.0L2171.0,997.1M2083.5,1110.0L2171.0,1022.5M2108.9,1110.0L2171.0,1047.9M2134.3,1110.0L2171.0,1073.3M2159.7,1110.0L2171.0,1098.7" stroke="#98a1ae" stroke-width="1.4" fill="none"/>
<path d="M71,920.5H2400" stroke="#7a7148" stroke-width="2.8"/>
<path d="M300,533.5H555M1756,533.5H2400" stroke="#7a7148" stroke-width="2.8"/>
<path d="M1970.5,220V1103" stroke="#7f7640" stroke-width="2.2"/>
<path d="M1988.5,220V1103M2181.5,220V1103" stroke="#3fa3bc" stroke-width="3"/>
<path d="M2000,220V1103M2171,220V1103" stroke="#d8dee5" stroke-width="2"/>
<path d="M555,530V567M1756,526V557" stroke="#7a7148" stroke-width="2"/>
<path d="M555,567V850.5H731" stroke="#d8dee5" stroke-width="2" fill="none"/>
<path d="M731,777H1757" stroke="#d8dee5" stroke-width="2" fill="none"/>
<path d="M555,567H731V641.5H1757V777M731,777V850.5" stroke="#8f8a62" stroke-width="2.6" fill="none"/>
<path d="M731.5,647V771" stroke="#3a9ccc" stroke-width="2.6"/>
<path d="M555,563L558,567L555,571L552,567Z" fill="#a8a250"/>
<path d="M731.5,563L734.5,567L731.5,571L728.5,567Z" fill="#a8a250"/>
<path d="M731.5,637.5L734.5,641.5L731.5,645.5L728.5,641.5Z" fill="#a8a250"/>
<path d="M1757,637.5L1760,641.5L1757,645.5L1754,641.5Z" fill="#a8a250"/>
<path d="M1757,773L1760,777L1757,781L1754,777Z" fill="#a8a250"/>
<path d="M731.5,773L734.5,777L731.5,781L728.5,777Z" fill="#a8a250"/>
<path d="M731.5,846.5L734.5,850.5L731.5,854.5L728.5,850.5Z" fill="#a8a250"/>
<path d="M555,529.5L558,533.5L555,537.5L552,533.5Z" fill="#a8a250"/>
<path d="M1756,529.5L1759,533.5L1756,537.5L1753,533.5Z" fill="#a8a250"/>
<g stroke="#1a1f10" stroke-width="0.6" paint-order="stroke">
<text x="619" y="563" font-size="27.5" fill="#d2cf6e" textLength="47" lengthAdjust="spacingAndGlyphs">1550</text>
<text x="1221" y="636.5" font-size="27.5" fill="#d2cf6e" textLength="46" lengthAdjust="spacingAndGlyphs">9015</text>
<text x="1105" y="917" font-size="27.5" fill="#d2cf6e" textLength="59" lengthAdjust="spacingAndGlyphs">25210</text>
<text x="2139" y="532" font-size="27.5" fill="#d2cf6e" textLength="46" lengthAdjust="spacingAndGlyphs">7145</text>
<text transform="translate(727,623.5) rotate(-90)" font-size="27.5" fill="#d2cf6e" textLength="37" lengthAdjust="spacingAndGlyphs">650</text>
<text transform="translate(727,832.5) rotate(-90)" font-size="27.5" fill="#d2cf6e" textLength="37" lengthAdjust="spacingAndGlyphs">650</text>
<text transform="translate(1754,733) rotate(-90)" font-size="27.5" fill="#d2cf6e" textLength="47" lengthAdjust="spacingAndGlyphs">1200</text>
<text transform="translate(1969,733) rotate(-90)" font-size="27.5" fill="#d2cf6e" textLength="62" lengthAdjust="spacingAndGlyphs">21260</text>
</g>
<g stroke="#c9cdd3" stroke-width="2" fill="none">
<path d="M95.5,1069V990M88,1006L95.5,989L103,1006"/>
<rect x="87" y="1070" width="16" height="16"/>
<path d="M103,1078H184M166,1070L184,1078L166,1086"/>
<path d="M89,959L95.5,968L102,959M95.5,968V976"/>
<path d="M198,1069L212,1086M212,1069L198,1086"/>
</g>
</g>
<!-- compass / viewcube -->
<g transform="translate(2282,342)">
<circle r="60" fill="none" stroke="#4a525e" stroke-width="17"/>
<rect x="-15" y="-72" width="30" height="26" fill="#212a35"/>
<rect x="-15" y="46" width="30" height="26" fill="#212a35"/>
<rect x="-72" y="-15" width="26" height="30" fill="#212a35"/>
<rect x="46" y="-15" width="26" height="30" fill="#212a35"/>
<g font-size="21" fill="#8c939d" text-anchor="middle" stroke="#8c939d" stroke-width="0.8">
<text x="0" y="-51">N</text>
<text x="0" y="68">S</text>
<text x="-60" y="8">W</text>
<text x="60" y="8">E</text>
</g>
<rect x="-30" y="-30" width="60" height="60" rx="9" fill="#c6c8cc"/>
<rect x="-19" y="-18" width="37" height="36" fill="#bcbec2"/>
<text x="0" y="4" font-size="10" font-weight="700" fill="#70747a" text-anchor="middle">TOP</text>
</g>

<!-- popup menu -->
<rect x="53" y="488" width="269" height="388" fill="#4e5e77"/>
<rect x="53" y="488" width="269" height="388" fill="none" stroke="#56667f" stroke-width="1"/>
<rect x="57.5" y="520.5" width="168" height="28" fill="#1e8ae6" stroke="#70bdf6" stroke-width="1"/>
<g fill="#2f3a4a">
<rect x="59" y="614" width="259" height="2"/>
<rect x="59" y="716" width="259" height="2"/>
<rect x="59" y="787" width="259" height="2"/>
</g>
<g font-size="16" fill="#e6eaef" stroke="#e6eaef" stroke-width="0.3">
<text x="89" y="511" letter-spacing="0.2">Dimension Align</text>
<text x="89" y="541" letter-spacing="0.2" fill="#f4f8fc">Dimension Merge</text>
<text x="89" y="571" letter-spacing="0.3">Dimension Text Dodge</text>
<text x="89" y="601">Size Drive</text>
<text x="89" y="643">Continue</text>
<text x="89" y="673" letter-spacing="0.1">Enhanced Ordinate Dimension</text>
<text x="89" y="703">Object Dimension</text>
<text x="89" y="744">Set as Current Dimension Style</text>
<text x="89" y="774">Save as New Style</text>
<text x="89" y="816">Center Line</text>
<text x="89" y="846">Center Mark</text>
<text x="146" y="872" font-size="15">Dimensions</text>
</g>
<g fill="none" stroke-width="1.6">
<!-- align -->
<path d="M64,496V514M81,496V514" stroke="#e6eaef"/>
<path d="M65,499H80" stroke="#e0c858" stroke-width="2"/>
<path d="M65,509H80" stroke="#5aa8e0" stroke-width="2"/>
<!-- merge -->
<path d="M64,526V544M81,526V544" stroke="#d8e8f8"/>
<path d="M65,529H80" stroke="#e8eef4" stroke-width="1.5"/>
<path d="M75,532V544" stroke="#a8c8e8" stroke-dasharray="2,1"/>
<!-- text dodge -->
<path d="M63,554V574" stroke="#e6eaef"/>
<path d="M73,563L69,563M66,567L70,556L74,567" stroke="#e6eaef" stroke-width="1.3"/>
<path d="M78,556V566" stroke="#e6eaef"/>
<path d="M66,571H70" stroke="#e0c858"/>
<path d="M73,568V574M77,568V574M80,568V574" stroke="#5aa8e0" stroke-width="1.2"/>
<!-- size drive -->
<path d="M63,587V606M81,587V606" stroke="#a8d0f0"/>
<path d="M64,590H80" stroke="#e6eaef" stroke-dasharray="2,1"/>
<rect x="63" y="598" width="12" height="6" fill="#a8d4f4" stroke="none"/>
<!-- continue -->
<path d="M64,628V645M71,628V645M80,628V645" stroke="#e6eaef"/>
<path d="M64,633H80" stroke="#e0c858" stroke-width="1.8"/>
<!-- enhanced ordinate -->
<rect x="62" y="670" width="4" height="4" stroke="#e6eaef" stroke-width="1.2"/>
<path d="M66,670L71,663H82" stroke="#e6eaef" stroke-width="1.3"/>
<path d="M72,658H82M74,668H82" stroke="#5aa8e0" stroke-width="1.3" stroke-dasharray="2,1"/>
<!-- object dim -->
<path d="M64,688H78" stroke="#e0c858" stroke-width="1.5"/>
<rect x="64" y="692" width="13" height="13" stroke="#e6eaef"/>
<path d="M81,688V696M81,699V705" stroke="#e6eaef" stroke-width="1.8"/>
<!-- set as current -->
<path d="M64,748V729H81V735" stroke="#e6eaef"/>
<path d="M65,731H80" stroke="#e0c858" stroke-width="1.8"/>
<circle cx="77" cy="742" r="2.2" stroke="#e0c858" stroke-width="1.4"/>
<!-- save as new -->
<path d="M64,778V759H81V765" stroke="#e6eaef"/>
<path d="M65,761H80" stroke="#e0c858" stroke-width="1.8"/>
<path d="M77,770V777M73.5,773.5H80.5" stroke="#8ab8e8" stroke-width="1.2"/>
<!-- center line -->
<path d="M66,801H80M66,816H80" stroke="#e6eaef"/>
<path d="M62,808.5H82" stroke="#8ab8e8" stroke-dasharray="5,2"/>
<!-- center mark -->
<circle cx="72.5" cy="840" r="8" stroke="#e6eaef"/>
<path d="M63,840H82M72.5,830V850" stroke="#e6eaef" stroke-width="1.4" stroke-dasharray="4,2"/>
</g>
<!-- cursor -->
<path d="M140.5,530.5 L140.5,548 L144.5,544 L148,551.5 L151,550 L147.5,543 L153,543 Z" fill="#ffffff" stroke="#10161e" stroke-width="1.2" stroke-linejoin="round"/>

<!-- model tabs -->
<path d="M87,1110.5H104M87,1116H104M87,1121.5H104" stroke="#e4e8ee" stroke-width="2"/>
<path d="M134,1104H216L206,1129H124Z" fill="#566a88"/>
<text x="149" y="1121.5" font-size="15" font-weight="700" fill="#eef1f5">Model</text>
<path d="M328,1126L333,1108M401,1126L406,1108M436,1126L441,1108" stroke="#59626e" stroke-width="1"/>
<path d="M421.5,1110V1124M414.5,1117H428.5" stroke="#eef1f5" stroke-width="2.4"/>
<!-- command window -->
<rect x="71" y="1135" width="28" height="186" fill="#474e59"/>
<path d="M80,1142L88,1150M88,1142L80,1150" stroke="#6c727b" stroke-width="1.3"/>
<g font-size="20.5" fill="#bcc0c6" transform="scale(0.9,1)">
<text style="font-family:'Liberation Serif'" x="115.57 126.72 137.86 149.01 160.15 171.29 182.44 193.58" y="1153.5" text-anchor="middle">Command:</text>
<text style="font-family:'Liberation Serif'" x="115.57 126.72 137.86 149.01 160.15 171.29 182.44 193.58 204.73 215.87 227.02 238.16 249.31 260.45 271.59 282.74" y="1176" text-anchor="middle">Command: _.erase</text>
<text style="font-family:'Liberation Serif'" x="115.57 126.72 137.86 149.01 160.15 171.29 182.44" y="1198.5" text-anchor="middle">1 found</text>
<text style="font-family:'Liberation Serif'" x="115.57 126.72 137.86 149.01 160.15 171.29 182.44 193.58" y="1221" text-anchor="middle">Command:</text>
<text style="font-family:'Liberation Serif'" x="115.57 126.72 137.86 149.01 160.15 171.29 182.44 193.58 204.73 215.87 227.02 238.16 249.31 260.45 271.59 282.74" y="1243.5" text-anchor="middle">Command: _.erase</text>
<text style="font-family:'Liberation Serif'" x="115.57 126.72 137.86 149.01 160.15 171.29 182.44" y="1266" text-anchor="middle">1 found</text>
<text style="font-family:'Liberation Serif'" x="115.57 126.72 137.86 149.01 160.15 171.29 182.44 193.58" y="1312.5" text-anchor="middle">Command:</text>
</g>
<rect x="99" y="1289" width="2292" height="2" fill="#6a6e76"/>
<rect x="193" y="1293" width="1.5" height="19" fill="#c6c9ce"/>
<rect x="2391" y="1143" width="9" height="147" fill="#2c2f35"/>
<path d="M2394,1152L2397,1148L2400,1152M2394,1279L2397,1283L2400,1279" stroke="#8a8e96" stroke-width="1" fill="none"/>
<rect x="2394" y="1252" width="6" height="12" fill="#4a4e56"/>
<!-- status bar -->
<g transform="scale(0.9,1)"><text style="font-family:'Liberation Serif'" x="10.83 19.17 27.50 35.83 44.17 52.50 60.83 69.17 77.50 85.83 94.17 102.50 110.83 119.17 127.50 135.83 144.17 152.50 160.83 169.17 177.50 185.83 194.17 202.50 210.83 219.17 227.50 235.83 244.17 252.50 260.83 269.17" y="1345" font-size="14.5" fill="#d0d4da" text-anchor="middle">-1.3633E+07, -3.7472E+06, 0.0000</text></g>
<g fill="#4d6b90">
<rect x="443" y="1326" width="27" height="24"/>
<rect x="474" y="1326" width="26" height="24"/>
<rect x="534" y="1326" width="26" height="24"/>
<rect x="594" y="1326" width="26" height="24"/>
<rect x="715" y="1326" width="26" height="24"/>
</g>
<g fill="none" stroke="#e4e8ee" stroke-width="1.6">
<path d="M327,1330H345M327,1336H345M327,1342H345M327,1348H345M328,1329V1349M334,1329V1349M340,1329V1349M345,1329V1349" stroke-width="1.4"/>
<rect x="358" y="1330" width="17" height="18" stroke-width="1.4"/>
<path d="M358,1336H375M358,1342H375M364,1330V1348M370,1330V1348" stroke-width="1"/>
<path d="M389,1328V1348H406M389,1342H395V1348" stroke-width="1.4"/>
<circle cx="426" cy="1339" r="8"/>
<path d="M426,1339L433,1336" stroke-width="1.4"/>
<rect x="449" y="1330" width="15" height="17"/>
<path d="M480,1347H498M480,1347L496,1331" stroke-width="1.6"/>
<path d="M509,1328V1348H526M509,1348L518,1339"/>
<path d="M520,1338L524,1330L522,1336H526L521,1344" stroke="#f0c840" stroke-width="1.4"/>
<path d="M539,1335H549M544,1330V1340M546,1344H557" stroke-width="1.8"/>
<path d="M569,1332H585M569,1338H585M569,1345H585" stroke-width="2.4"/>
<rect x="598" y="1330" width="18" height="17" stroke="#e4e8ee"/>
<rect x="601" y="1333" width="12" height="11" fill="#9ccaf0" stroke="none"/>
<rect x="630" y="1330" width="15" height="18"/>
<path d="M633,1335H642M633,1340H642M633,1345H642" stroke-width="1.2"/>
<path d="M659,1332H667M663,1328V1336" stroke-width="1.6"/>
<rect x="667" y="1337" width="9" height="9" fill="#c8ccd2" stroke="none"/>
<path d="M688,1332H708M688,1338H708M688,1345H708" stroke-width="2"/>
<rect x="720" y="1329" width="15" height="17" stroke="#c8d8e8" stroke-width="1.2"/>
<path d="M720,1335H735M726,1329V1346" stroke="#a8c8e8" stroke-width="1"/>
</g>
<rect x="750" y="1340" width="9" height="8" fill="#a8acb2"/>
<rect x="758" y="1328" width="10" height="9" fill="#5ab0f0"/>
<path d="M756,1342L762,1335" stroke="#e4e8ee" stroke-width="1.4"/>
<!-- right status -->
<rect x="2001" y="1327.5" width="19" height="19" fill="#2f4868" stroke="#5a94d0" stroke-width="1.2"/>
<text x="2003" y="1342" class="m" font-size="12" fill="#c8dcf0" textLength="15" lengthAdjust="spacingAndGlyphs">0.0</text>
<g transform="scale(0.9,1)"><text style="font-family:'Liberation Serif'" x="2252.00 2260.44 2268.89 2277.33 2285.78 2294.22 2302.67 2311.11 2319.56 2328.00 2336.44" y="1343" font-size="14.5" fill="#a4a8ae" text-anchor="middle">Millimeters</text></g>
<path d="M2114,1333H2125L2119.5,1339Z" fill="#e4e8ee"/>
<path d="M2147,1327L2151,1338L2157,1347L2147,1342L2137,1347L2143,1338Z" fill="#9ed0f4"/>
<g transform="scale(0.9,1)"><text style="font-family:'Liberation Serif'" x="2404.17 2412.50 2420.83" y="1343" font-size="14.5" fill="#a4a8ae" text-anchor="middle">1:1</text></g>
<path d="M2189,1333H2200L2194.5,1339Z" fill="#e4e8ee"/>
<path d="M2222,1327L2226,1338L2232,1347L2222,1342L2212,1347L2218,1338Z" fill="#9ed0f4"/>
<circle cx="2229" cy="1341" r="3.5" fill="#f0c840"/>
<path d="M2248,1327L2252,1338L2258,1347L2248,1342L2238,1347L2244,1338Z" fill="#9ed0f4"/>
<g fill="none" stroke="#d8dce2" stroke-width="1.6">
<rect x="2267" y="1334" width="10" height="10"/>
<circle cx="2281" cy="1333" r="5"/>
<circle cx="2279" cy="1345" r="3"/>
<path d="M2352,1336V1329H2359M2352,1329L2358,1335M2369,1336V1329H2362M2369,1329L2363,1335M2352,1341V1348H2359M2352,1348L2358,1342M2369,1341V1348H2362M2369,1348L2363,1342"/>
</g>
<g transform="translate(2304,1338)">
<circle r="6" fill="#5ab0f0"/>
<path d="M0,-9V9M-9,0H9M-6.4,-6.4L6.4,6.4M-6.4,6.4L6.4,-6.4" stroke="#5ab0f0" stroke-width="2.6"/>
<circle r="2.6" fill="#343c48"/>
</g>
<rect x="2324" y="1331" width="17" height="14" fill="none" stroke="#9ab4d0" stroke-width="1.3"/>
<path d="M2328,1328V1331M2332,1328V1331M2336,1328V1331M2328,1345V1348M2332,1345V1348M2336,1345V1348" stroke="#9ab4d0" stroke-width="1"/>
<path d="M2329,1338L2336,1334V1342Z" fill="#d8b840"/>
<path d="M2379,1330H2400M2379,1338H2400M2379,1346H2400" stroke="#6aa8e0" stroke-width="2.4"/>

</svg>
</body></html>
